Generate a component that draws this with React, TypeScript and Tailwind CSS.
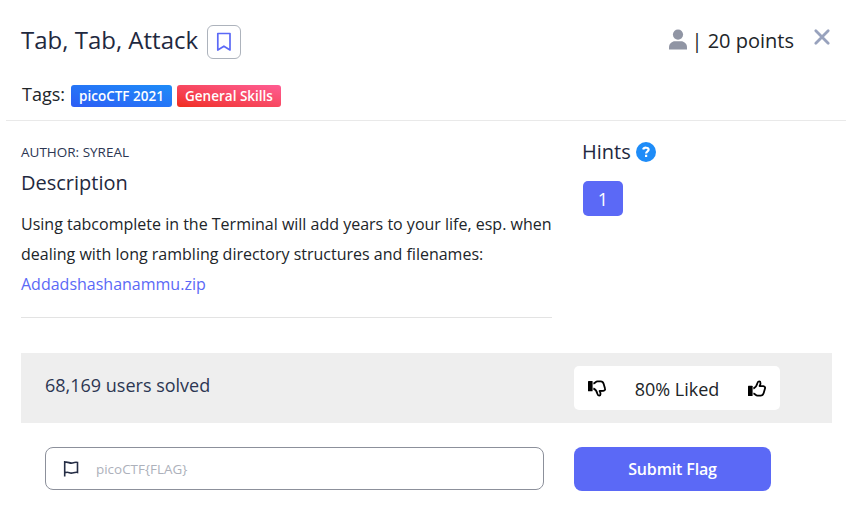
const Thumb = ({ down = false }: { down?: boolean }) => (
  <svg width="18" height="17" viewBox="0 0 18 17" className={down ? '-scale-y-100' : ''}>
    <rect x="0" y="5.7" width="4.6" height="10.3" rx="0.6" fill="#000" />
    <path
      d="M5.4 8.6C7.3 7.7 8.8 5.6 9.4 3.1C9.9 0.8 12.4 0.8 12.5 2.9C12.6 4.2 12.1 5.1 11.6 6L15.3 6.2C16.8 6.4 17.4 7.4 17 8.5L15.7 13C15.2 14.7 14.2 15.6 12.7 15.6H9.5C7.7 15.6 7.2 14 5.4 13.4"
      fill="none" stroke="#000" strokeWidth="1.8" strokeLinejoin="round"
    />
  </svg>
);

export default function App() {
  return (
    <main className="h-[531px] w-[854px] overflow-hidden whitespace-nowrap bg-white font-['Open_Sans',sans-serif] text-[#212529]">
      <header className="ml-[6px] flex h-[121px] w-[840px] flex-col border-b border-[#e9e9e9] pl-[15px]">
        <div className="flex h-[59px] items-start pt-[25px]">
          <h1 className="-mt-px text-2xl leading-[31px] text-[#1f2940]">Tab, Tab, Attack</h1>
          <button className="ml-[9px] flex h-[34px] w-[34px] items-center justify-center rounded-md border border-[#adb3bc]">
            <svg width="16" height="20" viewBox="0 0 16 20" fill="none" stroke="#5b69f6" strokeWidth="1.7" strokeLinejoin="round">
              <path d="M1.8 1.5H14V18L7.9 14.2L1.8 18Z" />
            </svg>
          </button>
          <div className="ml-auto flex items-start">
            <svg className="mt-[4px]" width="18" height="21" viewBox="0 0 18 21" fill="#9095a4">
              <circle cx="9" cy="5.6" r="5.1" />
              <path d="M0 20.5V18.4C0 14.7 3 12.3 6 12.3H12C15 12.3 18 14.7 18 18.4V20.5Z" />
            </svg>
            <span className="ml-[5px] text-xl leading-[31px]">| 20 points</span>
            <svg className="ml-[19px] mt-[3px] mr-[15px]" width="18" height="18" viewBox="0 0 18 18" stroke="#98a2bd" strokeWidth="2.8" strokeLinecap="round">
              <path d="M2.8 2.8L15.2 15.2M15.2 2.8L2.8 15.2" />
            </svg>
          </div>
        </div>
        <div className="mt-[25px] flex items-start pl-px">
          <span className="w-[49px] text-lg leading-[21px]">Tags:</span>
          <span className="mt-px h-[22px] w-[101px] rounded-[3px] bg-linear-to-tr from-[#2c5cf5] to-[#1e8cf8] text-center text-[13.5px] leading-[22px] font-semibold text-white">picoCTF 2021</span>
          <span className="mt-px ml-[5px] h-[22px] w-[104px] rounded-[3px] bg-linear-to-tr from-[#f02b18] to-[#ff5c93] text-center text-[13.5px] leading-[22px] font-semibold text-white">General Skills</span>
        </div>
      </header>

      <div className="flex h-[232px] pl-[21px]">
        <section className="h-[197px] w-[531px] border-b border-[#e3e3e3] pt-[22px]">
          <p className="text-[13.5px] leading-[19px] text-[#2c3652]">AUTHOR: SYREAL</p>
          <h2 className="mt-[9px] text-xl leading-6 text-[#1f2940]">Description</h2>
          <p className="mt-[14px] text-base leading-[30px]">
            Using tabcomplete in the Terminal will add years to your life, esp. when
            <br />
            dealing with long rambling directory structures and filenames:
            <br />
            <a href="#" className="text-[#5b69f6]">Addadshashanammu.zip</a>
          </p>
        </section>
        <aside className="ml-[30px] pt-[19px]">
          <div className="flex items-center">
            <h2 className="text-xl leading-6 text-[#1f2940]">Hints</h2>
            <span className="ml-[5px] flex h-5 w-5 items-center justify-center rounded-full bg-[#1e8cf8]">
              <svg width="8" height="12" viewBox="0 0 8 12" fill="none" stroke="#fff" strokeWidth="2.2">
                <path d="M1.2 3.5C1.7 1.1 6.6 1.1 6.6 3.7C6.6 5.3 4.1 5.3 4.1 7.4M4.1 8.8V11" />
              </svg>
            </span>
          </div>
          <button className="mt-[17px] ml-px h-[35px] w-10 rounded-[5px] bg-[#5b69f6] pt-[2px] text-lg leading-[33px] text-white">1</button>
        </aside>
      </div>

      <section className="ml-[21px] flex h-[70px] w-[811px] bg-[#eeeeee] pl-6">
        <p className="w-[529px] pt-[20px] text-lg leading-6 text-[#2c3652]">68,169 users solved</p>
        <div className="mt-[13px] flex h-11 w-[206px] items-center justify-between rounded-[5px] bg-white px-[14px]">
          <Thumb down />
          <span className="pt-[2px] text-lg leading-6">80% Liked</span>
          <Thumb />
        </div>
      </section>

      <form className="mt-6 flex pl-[45px]">
        <label className="flex h-[43px] w-[499px] items-center rounded-lg border border-[#8c909b] pl-[17px]">
          <svg width="17" height="18" viewBox="0 0 17 18" fill="none" stroke="#252d45" strokeWidth="1.6">
            <path d="M1.7 1V16.5M1.7 2.4C5 1.2 6.6 3.7 9.2 3C11.3 2.3 12.6 1.8 14.5 2.4V12.4C11 11.7 9.3 14.2 6.5 12.8C4.7 12 3.1 12.2 1.7 12.8" />
          </svg>
          <input placeholder="picoCTF{FLAG}" className="ml-[16px] w-[400px] pt-[2px] text-[13.45px] outline-none placeholder:text-[#adb1bb]" />
        </label>
        <button type="button" className="ml-[30px] h-11 w-[197px] rounded-lg bg-[#5b69f6] text-base leading-6 font-semibold tracking-[-0.15px] text-white">Submit Flag</button>
      </form>
    </main>
  );
}
